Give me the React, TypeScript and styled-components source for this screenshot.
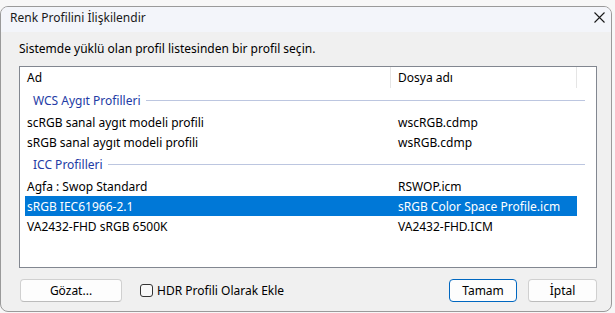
import React from "react";
import styled, { createGlobalStyle } from "styled-components";

const GlobalStyle = createGlobalStyle`
  html, body {
    margin: 0;
    padding: 0;
    background: #f7f7f7;
  }
  body {
    font-family: "Noto Sans", "Open Sans", sans-serif;
    font-size: 12px;
    color: #000;
  }
`;

const Window = styled.div`
  margin-top: 6px;
  width: 612px;
  height: 306px;
  box-sizing: border-box;
  border: 1px solid #9a9a9a;
  border-radius: 8px;
  overflow: hidden;
  display: flex;
  flex-direction: column;
  background: #f0f0f0;
`;

const TitleBar = styled.div`
  height: 25px;
  flex: none;
  box-sizing: border-box;
  display: flex;
  align-items: flex-start;
  justify-content: space-between;
  padding: 3px 6px 0 9px;
  line-height: 16px;
  background: #f3f5fa;
  color: #1a1a1a;
`;

const Close = styled.svg`
  width: 11px;
  height: 11px;
  margin-top: 2px;
`;

const Body = styled.div`
  flex: 1;
  display: flex;
  flex-direction: column;
  padding: 9px 14px 10px 18px;
`;

const Prompt = styled.div`
  height: 16px;
  line-height: 16px;
  margin-bottom: 9px;
`;

const ListBox = styled.div`
  height: 202px;
  box-sizing: border-box;
  width: 578px;
  border: 1px solid #828790;
  background: #fff;
  padding-left: 5px;
`;

const Row = styled.div<{ $h?: number; $sel?: boolean }>`
  display: flex;
  height: ${(p) => p.$h ?? 20}px;
  align-items: center;
  width: 552px;
  background: ${(p) => (p.$sel ? "#0078d7" : "transparent")};
  color: ${(p) => (p.$sel ? "#fff" : "#000")};
`;

const Cell = styled.div<{ $w: number; $pad: number; $divider?: boolean }>`
  width: ${(p) => p.$w}px;
  padding-left: ${(p) => p.$pad}px;
  box-sizing: border-box;
  height: 100%;
  display: flex;
  align-items: center;
  white-space: nowrap;
  border-right: ${(p) => (p.$divider ? "1px solid #e5e5e5" : "none")};
`;

const Group = styled.div`
  height: 24px;
  display: flex;
  align-items: center;
  padding-left: 8px;
  width: 560px;
  box-sizing: border-box;
  color: #233ba5;
  gap: 5px;
`;

const GroupLine = styled.div`
  flex: 1;
  height: 1px;
  background: #bcc6e0;
`;

const Footer = styled.div`
  display: flex;
  align-items: center;
  margin-top: 11px;
  padding-left: 1px;
`;

const Button = styled.button<{ $w: number; $primary?: boolean }>`
  width: ${(p) => p.$w}px;
  height: 23px;
  box-sizing: border-box;
  font: inherit;
  color: #000;
  background: #fdfdfd;
  border: 1px solid ${(p) => (p.$primary ? "#0067c0" : "#d0d0d0")};
  border-bottom-color: ${(p) => (p.$primary ? "#0067c0" : "#bcbcbc")};
  border-radius: 4px;
  padding: 0;
`;

const Check = styled.label`
  display: flex;
  align-items: center;
  gap: 4px;
  margin-left: 18px;
`;

const Box = styled.span`
  width: 13px;
  height: 13px;
  box-sizing: border-box;
  border: 1px solid #333;
  border-radius: 3px;
  background: #f8f8f8;
`;

const Spacer = styled.div`
  flex: 1;
`;

const Actions = styled.div`
  display: flex;
  gap: 11px;
`;

type Item = { name: string; file: string; sel?: boolean };

const groups: { title: string; items: Item[] }[] = [
  {
    title: "WCS Aygıt Profilleri",
    items: [
      { name: "scRGB sanal aygıt modeli profili", file: "wscRGB.cdmp" },
      { name: "sRGB sanal aygıt modeli profili", file: "wsRGB.cdmp" },
    ],
  },
  {
    title: "ICC Profilleri",
    items: [
      { name: "Agfa : Swop Standard", file: "RSWOP.icm" },
      { name: "sRGB IEC61966-2.1", file: "sRGB Color Space Profile.icm", sel: true },
      { name: "VA2432-FHD sRGB 6500K", file: "VA2432-FHD.ICM" },
    ],
  },
];

export default function App() {
  return (
    <>
      <GlobalStyle />
      <Window>
        <TitleBar>
          <span>Renk Profilini İlişkilendir</span>
          <Close viewBox="0 0 11 11">
            <path d="M0.5 0.5 L10.5 10.5 M10.5 0.5 L0.5 10.5" stroke="#1a1a1a" strokeWidth="1.1" />
          </Close>
        </TitleBar>
        <Body>
          <Prompt>Sistemde yüklü olan profil listesinden bir profil seçin.</Prompt>
          <ListBox>
            <Row $h={21}>
              <Cell $w={366} $pad={2} $divider>Ad</Cell>
              <Cell $w={186} $pad={7} $divider>Dosya adı</Cell>
            </Row>
            {groups.map((g) => (
              <React.Fragment key={g.title}>
                <Group>
                  <span>{g.title}</span>
                  <GroupLine />
                </Group>
                {g.items.map((it) => (
                  <Row key={it.name} $sel={it.sel}>
                    <Cell $w={366} $pad={2}>{it.name}</Cell>
                    <Cell $w={186} $pad={7}>{it.file}</Cell>
                  </Row>
                ))}
              </React.Fragment>
            ))}
          </ListBox>
          <Footer>
            <Button $w={102}>Gözat...</Button>
            <Check>
              <Box />
              <span>HDR Profili Olarak Ekle</span>
            </Check>
            <Spacer />
            <Actions>
              <Button $w={68} $primary>Tamam</Button>
              <Button $w={69}>İptal</Button>
            </Actions>
          </Footer>
        </Body>
      </Window>
    </>
  );
}
